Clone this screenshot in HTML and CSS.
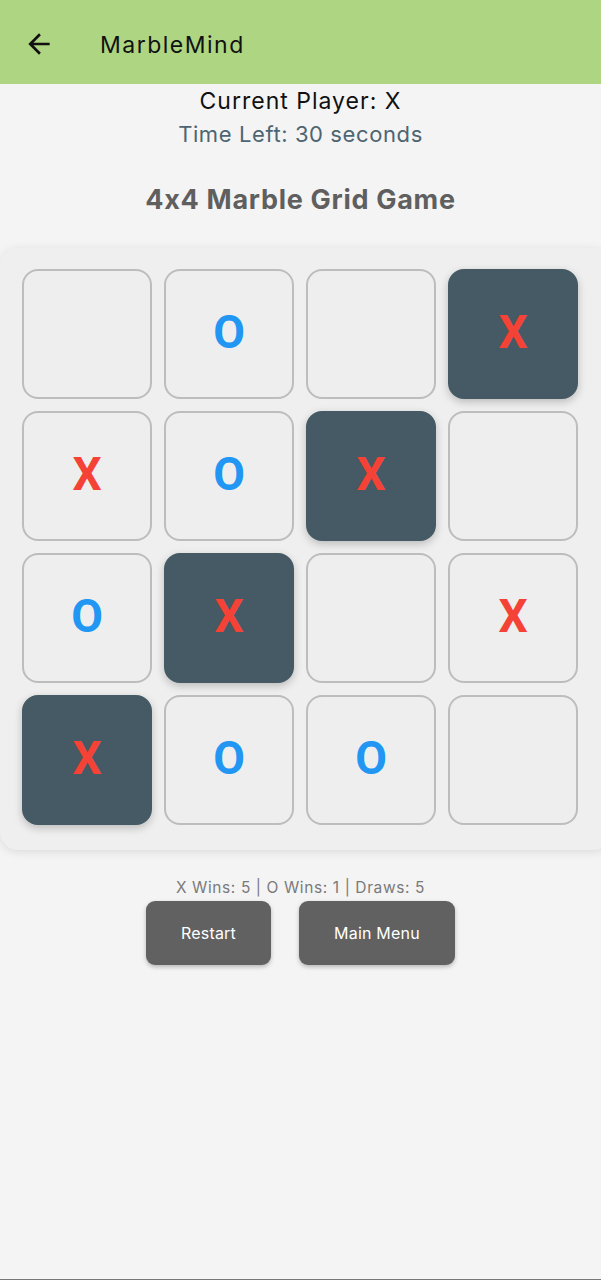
FILE: index.html
```html
<!DOCTYPE html>
<html>
<head>
<meta charset="utf-8">
<link rel="stylesheet" href="styles.css">
</head>
<body>
<header class="appbar">
  <svg class="back" viewBox="0 0 24 24" width="32" height="32"><path d="M20 11H7.83l5.59-5.59L12 4l-8 8 8 8 1.41-1.41L7.83 13H20v-2z" fill="#111"/></svg>
  <span class="title">MarbleMind</span>
</header>
<main class="page">
  <div class="player">Current Player: X</div>
  <div class="timer">Time Left: 30 seconds</div>
  <h1 class="heading">4x4 Marble Grid Game</h1>
  <section class="board">
    <div class="cell"></div>
    <div class="cell"><span class="o">O</span></div>
    <div class="cell"></div>
    <div class="cell dark"><span class="x">X</span></div>

    <div class="cell"><span class="x">X</span></div>
    <div class="cell"><span class="o">O</span></div>
    <div class="cell dark"><span class="x">X</span></div>
    <div class="cell"></div>

    <div class="cell"><span class="o">O</span></div>
    <div class="cell dark"><span class="x">X</span></div>
    <div class="cell"></div>
    <div class="cell"><span class="x">X</span></div>

    <div class="cell dark"><span class="x">X</span></div>
    <div class="cell"><span class="o">O</span></div>
    <div class="cell"><span class="o">O</span></div>
    <div class="cell"></div>
  </section>
  <div class="stats">X Wins: 5 | O Wins: 1 | Draws: 5</div>
  <div class="actions">
    <button class="btn restart">Restart</button>
    <button class="btn menu">Main Menu</button>
  </div>
</main>
<div class="bottomline"></div>
</body>
</html>
```
FILE: styles.css
```css
* { box-sizing: border-box; }
html, body {
  margin: 0;
  padding: 0;
  width: 601px;
  height: 1280px;
  overflow: hidden;
  background: #f4f4f4;
  font-family: Inter, Roboto, "Noto Sans", sans-serif;
  font-feature-settings: "calt" 0;
}
body { position: relative; }
.appbar {
  height: 84px;
  background: #aed581;
  display: flex;
  align-items: center;
  padding-left: 23px;
}
.back { display: block; margin-top: 3px; }
.title {
  margin-left: 45px;
  margin-top: 5px;
  font-size: 23px;
  color: #111;
  letter-spacing: 1.5px;
}
.page {
  display: flex;
  flex-direction: column;
  align-items: center;
}
.player {
  font-size: 23px;
  line-height: 34px;
  letter-spacing: 1px;
  color: #111;
}
.timer {
  margin-top: 1px;
  font-size: 22px;
  line-height: 30px;
  letter-spacing: 0.6px;
  color: #4e6470;
}
.heading {
  margin: 33px 0 0;
  font-size: 27px;
  line-height: 36px;
  font-weight: 700;
  letter-spacing: 0.7px;
  color: #5f5f5f;
}
.board {
  align-self: flex-start;
  margin-top: 30px;
  width: 612px;
  padding: 21px 34px 25px 22px;
  background: #efefef;
  border-radius: 18px;
  box-shadow: 0 2px 10px rgba(0,0,0,0.10);
  display: grid;
  grid-template-columns: repeat(4, 130px);
  grid-auto-rows: 130px;
  gap: 12px;
}
.cell {
  border: 2px solid #bdbdbd;
  border-radius: 16px;
  background: #eeeeee;
  display: flex;
  align-items: center;
  justify-content: center;
}
.cell.dark {
  background: #455a64;
  border-color: #455a64;
  box-shadow: 0 3px 8px rgba(0,0,0,0.22);
}
.cell span {
  font-family: Roboto, sans-serif;
  font-size: 46px;
  font-weight: 700;
  line-height: 1;
  margin-bottom: 5px;
}
.x { color: #f44336; }
.o { color: #2196f3; }
.stats {
  margin-top: 28px;
  font-size: 15.5px;
  line-height: 20px;
  letter-spacing: 0.6px;
  color: #7a7a7a;
}
.actions {
  margin-top: 3px;
  display: flex;
  gap: 28px;
}
.btn {
  height: 64px;
  border: none;
  border-radius: 9px;
  background: #616161;
  color: #fff;
  font-family: Inter, Roboto, sans-serif;
  font-size: 16px;
  letter-spacing: 0.2px;
  box-shadow: 0 2px 4px rgba(0,0,0,0.25);
}
.restart { width: 125px; }
.menu { width: 156px; }
.bottomline {
  position: absolute;
  left: 0;
  right: 0;
  bottom: 0;
  height: 1px;
  background: #777;
}
```
